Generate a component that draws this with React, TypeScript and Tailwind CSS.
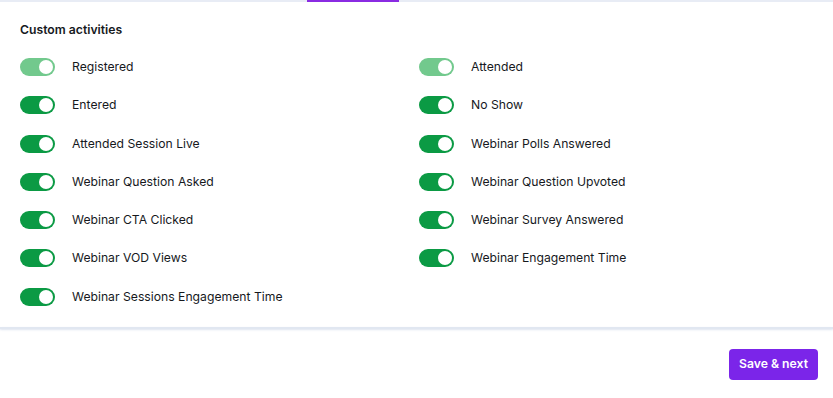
import { useState } from 'react';

type Activity = { label: string; on: boolean; locked?: boolean };

const LEFT: Activity[] = [
  { label: 'Registered', on: true, locked: true },
  { label: 'Entered', on: true },
  { label: 'Attended Session Live', on: true },
  { label: 'Webinar Question Asked', on: true },
  { label: 'Webinar CTA Clicked', on: true },
  { label: 'Webinar VOD Views', on: true },
  { label: 'Webinar Sessions Engagement Time', on: true },
];

const RIGHT: Activity[] = [
  { label: 'Attended', on: true, locked: true },
  { label: 'No Show', on: true },
  { label: 'Webinar Polls Answered', on: true },
  { label: 'Webinar Question Upvoted', on: true },
  { label: 'Webinar Survey Answered', on: true },
  { label: 'Webinar Engagement Time', on: true },
];

function Toggle({ on, locked, onClick }: { on: boolean; locked?: boolean; onClick: () => void }) {
  return (
    <button
      type="button"
      onClick={onClick}
      disabled={locked}
      className={`relative flex h-[18px] w-[35px] shrink-0 items-center rounded-full px-[2px] ${
        on ? (locked ? 'justify-end bg-[#72c98d]' : 'justify-end bg-[#0b9a44]') : 'justify-start bg-[#d1d5db]'
      }`}
    >
      <span className="block h-[14px] w-[14px] rounded-full bg-white" />
    </button>
  );
}

function Row({ item, onToggle }: { item: Activity; onToggle: () => void }) {
  return (
    <div className="flex h-[18px] items-center">
      <Toggle on={item.on} locked={item.locked} onClick={onToggle} />
      <span className="ml-[17px] text-[12.2px] leading-[18px] text-[#16191d]">{item.label}</span>
    </div>
  );
}

function Column({ initial }: { initial: Activity[] }) {
  const [items, setItems] = useState(initial);
  return (
    <div className="flex flex-col gap-y-[20.3px]">
      {items.map((item, i) => (
        <Row
          key={item.label}
          item={item}
          onToggle={() => setItems((prev) => prev.map((p, j) => (j === i ? { ...p, on: !p.on } : p)))}
        />
      ))}
    </div>
  );
}

export default function App() {
  return (
    <div className="flex h-[398px] w-[833px] flex-col bg-white font-['Inter',sans-serif]">
      <div className="relative h-[2px] w-full bg-[#e8ecf5]">
        <div className="absolute left-[307px] top-0 h-[2px] w-[92px] bg-[#8a2be2]" />
      </div>
      <div className="px-5 pt-[19px]">
        <h2 className="text-[12.2px] font-semibold leading-[18px] text-[#16191d]">Custom activities</h2>
        <div className="mt-[19px] grid grid-cols-[399px_1fr]">
          <Column initial={LEFT} />
          <Column initial={RIGHT} />
        </div>
      </div>
      <div className="mt-[21px] h-[2px] w-full bg-[#e1e7f1] shadow-[0_1px_2px_rgba(200,210,230,0.6)]" />
      <div className="flex justify-end px-[15px] pt-[20px]">
        <button
          type="button"
          className="h-[31px] w-[89px] rounded-[4px] bg-[#7b25e9] text-[12.2px] font-semibold text-white"
        >
          Save &amp; next
        </button>
      </div>
    </div>
  );
}
